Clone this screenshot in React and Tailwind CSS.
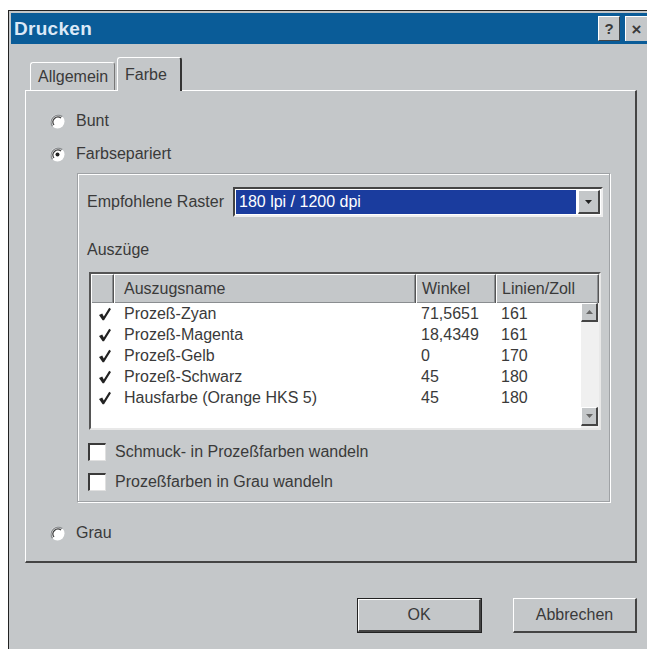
import React from "react";

const face = "bg-[#c4c7c9]";
const textFont = "font-['Liberation_Sans',Arial,sans-serif]";

function Radio({ checked }) {
  return (
    <svg width="15" height="15" viewBox="0 0 15 15" className="shrink-0">
      <circle cx="7.5" cy="7.5" r="7" fill="#ffffff" />
      <path d="M12.4 2.6 A7 7 0 0 0 2.6 12.4" fill="none" stroke="#8a8d90" strokeWidth="1.4" />
      <path d="M11 4 A5 5 0 0 0 4 11" fill="none" stroke="#3a3a3a" strokeWidth="1.2" />
      {checked && <circle cx="7.5" cy="7.5" r="2" fill="#222" />}
    </svg>
  );
}

function RadioRow({ label, checked, className = "" }) {
  return (
    <div className={`flex h-[18px] items-center gap-[11px] ${className}`}>
      <Radio checked={checked} />
      <span className="text-[16px] leading-none text-[#3a3a3a]">{label}</span>
    </div>
  );
}

function CheckBox({ label, className = "" }) {
  return (
    <div className={`flex h-[18px] items-center gap-[9px] ${className}`}>
      <div className="h-[18px] w-[18px] shrink-0 border-l-2 border-t-2 border-l-[#3a3a3a] border-t-[#3a3a3a] border-r border-b border-r-[#e0e0e0] border-b-[#e0e0e0] bg-white" />
      <span className="text-[16px] leading-none text-[#3a3a3a]">{label}</span>
    </div>
  );
}

function Tick() {
  return (
    <svg width="14" height="14" viewBox="0 0 14 14">
      <path d="M1 8 L4.2 6.6 L5.8 9.6 L11.2 0.8 L13 2 L6 13.2 L4.6 13.2 Z" fill="#222" />
    </svg>
  );
}

function ScrollArrow({ up }) {
  return (
    <div className={`flex h-[19px] w-[17px] items-center justify-center ${face} border-t border-l border-t-white border-l-white border-r-2 border-b-2 border-r-[#444] border-b-[#444]`}>
      <svg width="7" height="4" viewBox="0 0 7 4">
        {up ? <path d="M0 4 L3.5 0 L7 4 Z" fill="#666" /> : <path d="M0 0 L3.5 4 L7 0 Z" fill="#666" />}
      </svg>
    </div>
  );
}

const rows = [
  ["Prozeß-Zyan", "71,5651", "161"],
  ["Prozeß-Magenta", "18,4349", "161"],
  ["Prozeß-Gelb", "0", "170"],
  ["Prozeß-Schwarz", "45", "180"],
  ["Hausfarbe (Orange HKS 5)", "45", "180"],
];

function HeaderCell({ w, children, pl = "pl-[5px]" }) {
  return (
    <div className={`flex h-full items-center ${w} ${pl} border-t border-l border-t-white border-l-white border-r border-r-[#555] shadow-[inset_-1px_-1px_0_#8a8d90] text-[16px] text-[#3a3a3a]`}>
      {children}
    </div>
  );
}

function SeparationList() {
  return (
    <div className="ml-[11px] mt-[13px] h-[158px] w-[512px] border-2 border-t-[#555] border-l-[#555] border-r-[#e8e8e8] border-b-[#e8e8e8] bg-white">
      <div className={`flex h-[29px] ${face}`}>
        <HeaderCell w="w-[23px]" />
        <HeaderCell w="w-[302px]" pl="pl-[9px]">Auszugsname</HeaderCell>
        <HeaderCell w="w-[80px]">Winkel</HeaderCell>
        <HeaderCell w="w-[103px]">Linien/Zoll</HeaderCell>
      </div>
      <div className="flex h-[125px]">
        <div className="w-[490px]">
          {rows.map(([name, angle, lpi]) => (
            <div key={name} className="flex h-[21px] items-center text-[16px] leading-none text-[#3a3a3a]">
              <div className="flex w-[23px] justify-center pl-[4px]">
                <Tick />
              </div>
              <div className="w-[302px] pl-[10px]">{name}</div>
              <div className="w-[80px] pl-[5px]">{angle}</div>
              <div className="pl-[5px]">{lpi}</div>
            </div>
          ))}
        </div>
        <div className="flex w-[18px] flex-col justify-between bg-[#f0f0f0] pb-[2px]">
          <ScrollArrow up />
          <ScrollArrow />
        </div>
      </div>
    </div>
  );
}

function RasterSelect() {
  return (
    <div className="mt-[13px] flex h-[30px] items-center pl-[9px]">
      <span className="w-[146px] text-[16px] leading-none text-[#3a3a3a]">Empfohlene Raster</span>
      <div className="flex h-[30px] w-[370px] items-center gap-[2px] border-2 border-t-[#444] border-l-[#444] border-r-[#eee] border-b-[#eee] bg-white p-[1px]">
        <div className="flex h-full flex-1 items-center bg-[#1a3c9e] pl-[3px] text-[16px] leading-none text-white">
          180 lpi / 1200 dpi
        </div>
        <div className={`flex h-full w-[22px] items-center justify-center ${face} border-t border-l border-t-white border-l-white border-r-2 border-b-2 border-r-[#444] border-b-[#444]`}>
          <svg width="7" height="4" viewBox="0 0 7 4">
            <path d="M0 0 L3.5 4 L7 0 Z" fill="#222" />
          </svg>
        </div>
      </div>
    </div>
  );
}

function Button({ children, isDefault, w }) {
  return (
    <div className={`${w} h-[35px] ${isDefault ? "border border-[#222]" : ""}`}>
      <div className={`flex h-full w-full items-center justify-center ${face} border-t border-l border-t-white border-l-white border-r-2 border-b-2 border-r-[#444] border-b-[#444] text-[16px] text-[#3a3a3a]`}>
        {children}
      </div>
    </div>
  );
}

export default function App() {
  return (
    <div className={`h-[649px] w-[647px] overflow-hidden bg-white pl-[8px] pt-[10px] ${textFont}`}>
      <div className={`h-[639px] w-[639px] border-l border-t border-[#222] ${face} pl-[2px] pt-[2px]`}>
        {/* title bar */}
        <div className="flex h-[31px] items-center justify-between bg-[#0a5c98] pl-[3px]">
          <span className="text-[19px] font-bold leading-none tracking-[0.3px] text-[#dce9f7]">Drucken</span>
          <div className="flex items-center gap-[5px]">
            <div className={`flex h-[25px] w-[22px] items-center justify-center ${face} border-t border-l border-t-white border-l-white border-r border-b border-r-[#444] border-b-[#444] text-[15px] font-bold leading-none text-[#3a3a3a]`}>
              ?
            </div>
            <div className={`flex h-[25px] w-[22px] items-center justify-center ${face} border-t border-l border-t-white border-l-white text-[17px] font-bold leading-none text-[#3a3a3a]`}>
              ×
            </div>
          </div>
        </div>

        {/* tabs */}
        <div className="ml-[19px] mt-[13px] flex h-[33px] items-end">
          <div className="flex h-[28px] w-[85px] items-center rounded-t-[3px] border-l border-t border-r border-l-white border-t-white border-r-[#777] pl-[7px] text-[16px] leading-none text-[#3a3a3a]">
            Allgemein
          </div>
          <div className={`relative z-10 -mb-[1px] ml-[2px] flex h-[34px] w-[65px] items-start rounded-t-[3px] border-l border-t border-r-2 border-l-white border-t-white border-r-[#333] ${face} pl-[7px] pt-[9px] text-[16px] leading-none text-[#3a3a3a]`}>
            Farbe
          </div>
        </div>

        {/* tab page */}
        <div className="ml-[14px] h-[473px] w-[612px] border-l border-t border-l-white border-t-white border-r-2 border-b-2 border-r-[#444] border-b-[#444] pl-[24px]">
          <RadioRow label="Bunt" className="mt-[21px]" />
          <RadioRow label="Farbsepariert" checked className="mt-[15px]" />

          <div className="ml-[27px] mt-[10px] flex h-[329px] w-[533px] flex-col border border-[#9fa2a5] shadow-[inset_1px_1px_0_#ffffff,1px_1px_0_#ffffff] bg-[#c7cacc]">
            <RasterSelect />
            <div className="mt-[24px] flex h-[18px] items-center pl-[9px] text-[16px] leading-none text-[#3a3a3a]">Auszüge</div>
            <SeparationList />
            <CheckBox label="Schmuck- in Prozeßfarben wandeln" className="ml-[10px] mt-[13px]" />
            <CheckBox label="Prozeßfarben in Grau wandeln" className="ml-[10px] mt-[12px]" />
          </div>

          <RadioRow label="Grau" className="mt-[22px]" />
        </div>

        {/* buttons */}
        <div className="mt-[35px] flex justify-end gap-[31px] pr-[10px]">
          <Button isDefault w="w-[125px]">OK</Button>
          <Button w="w-[124px]">Abbrechen</Button>
        </div>
      </div>
    </div>
  );
}
